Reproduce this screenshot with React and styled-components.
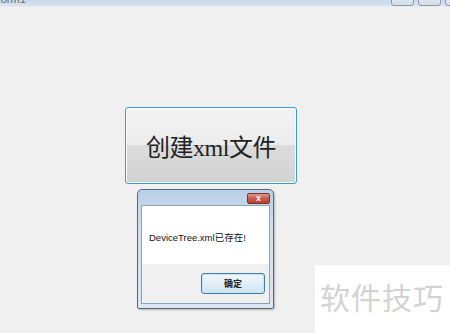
import React from 'react';
import styled, { createGlobalStyle } from 'styled-components';

const GlobalStyle = createGlobalStyle`
  body {
    margin: 0;
    background: #f0f0f0;
    font-family: 'Liberation Sans', 'Noto Sans CJK SC', sans-serif;
  }
`;

export default function App() {
  return (
    <Screen>
      <GlobalStyle />
      <TitleStrip>
        <FormTitle>Form1</FormTitle>
        <WindowButtons>
          <WinButton />
          <WinButton />
          <WinButton />
        </WindowButtons>
      </TitleStrip>

      <FormBody>
        <CreateButton>创建xml文件</CreateButton>

        <Dialog>
          <DialogTitle>
            <CloseButton>x</CloseButton>
          </DialogTitle>
          <DialogClient>
            <Message>DeviceTree.xml已存在!</Message>
            <ButtonBar>
              <OkButton>确定</OkButton>
            </ButtonBar>
          </DialogClient>
        </Dialog>
      </FormBody>

      <Watermark>软件技巧</Watermark>
    </Screen>
  );
}

const Screen = styled.div`
  position: relative;
  width: 450px;
  height: 333px;
  overflow: hidden;
  background: #f0f0f0;
`;

const TitleStrip = styled.div`
  display: flex;
  justify-content: space-between;
  align-items: flex-end;
  height: 6px;
  overflow: hidden;
  background: linear-gradient(#c8d8e9, #d9e5f1);
  border-bottom: 1px solid #e4ebf3;
`;

const FormTitle = styled.span`
  margin-left: -6px;
  margin-bottom: 1px;
  font-size: 11px;
  line-height: 11px;
  color: #6a6a6a;
`;

const WindowButtons = styled.div`
  display: flex;
  gap: 4px;
  margin-right: -18px;
  align-self: stretch;
`;

const WinButton = styled.div`
  width: 21px;
  margin-top: -6px;
  border: 1px solid #8c9aaa;
  border-radius: 3px;
  background: linear-gradient(#e8eef5, #d3dde8);
`;

const FormBody = styled.div`
  display: flex;
  flex-direction: column;
  align-items: flex-start;
  padding-top: 100px;
`;

const CreateButton = styled.button`
  margin-left: 125px;
  width: 172px;
  height: 77px;
  padding: 0;
  border: 1px solid #3f9ccf;
  border-radius: 3px;
  box-shadow: inset 0 0 0 1px #f8fbfd;
  background: linear-gradient(#f3f3f3 0%, #ececec 49%, #dcdcdc 50%, #d2d2d2 100%);
  font-family: 'Liberation Serif', 'Noto Sans CJK SC', serif;
  font-size: 24px;
  color: #222;
  letter-spacing: -0.5px;
`;

const Dialog = styled.div`
  display: flex;
  flex-direction: column;
  margin-top: 5px;
  margin-left: 137px;
  width: 137px;
  height: 120px;
  box-sizing: border-box;
  border: 1px solid #58697a;
  border-radius: 5px 5px 2px 2px;
  background: linear-gradient(#b9cfe6, #cfdeee 30%, #dbe6f2);
  padding: 0 3px 4px;
  box-shadow: 1px 1px 2px rgba(0, 0, 0, 0.25);
`;

const DialogTitle = styled.div`
  display: flex;
  justify-content: flex-end;
  align-items: flex-start;
  height: 15px;
  padding-top: 3px;
  box-sizing: border-box;
`;

const CloseButton = styled.div`
  display: flex;
  align-items: center;
  justify-content: center;
  width: 23px;
  height: 11px;
  margin-right: 0px;
  box-sizing: border-box;
  border: 1px solid #7b2f2a;
  border-radius: 2px;
  background: linear-gradient(#e2968b, #c75a4c 50%, #b8422f);
  color: #fff;
  font-size: 9px;
  font-weight: bold;
  line-height: 9px;
`;

const DialogClient = styled.div`
  flex: 1;
  display: flex;
  flex-direction: column;
  border: 1px solid #8aa4bf;
  background: #f0f0f0;
`;

const Message = styled.div`
  height: 58px;
  display: flex;
  align-items: center;
  padding-left: 7px;
  padding-top: 4px;
  box-sizing: border-box;
  background: #fff;
  font-size: 9.5px;
  color: #111;
`;

const ButtonBar = styled.div`
  flex: 1;
  display: flex;
  justify-content: flex-end;
  align-items: flex-start;
  padding: 9px 4px 0 0;
`;

const OkButton = styled.button`
  width: 64px;
  height: 21px;
  padding: 0;
  border: 1px solid #3c7fb1;
  border-radius: 3px;
  box-shadow: inset 0 0 0 1px #c5e4f5;
  background: linear-gradient(#f0f7fc, #e2eef8 50%, #cfe3f2);
  font-family: 'Noto Sans CJK SC', sans-serif;
  font-size: 9px;
  font-weight: bold;
  color: #222;
`;

const Watermark = styled.div`
  position: absolute;
  left: 315px;
  top: 265px;
  width: 135px;
  height: 68px;
  box-sizing: border-box;
  padding: 13px 0 0 5px;
  background: #fff;
  font-family: 'Noto Sans CJK SC', sans-serif;
  font-size: 30px;
  line-height: 36px;
  letter-spacing: 1px;
  color: #d3d3d3;
`;
